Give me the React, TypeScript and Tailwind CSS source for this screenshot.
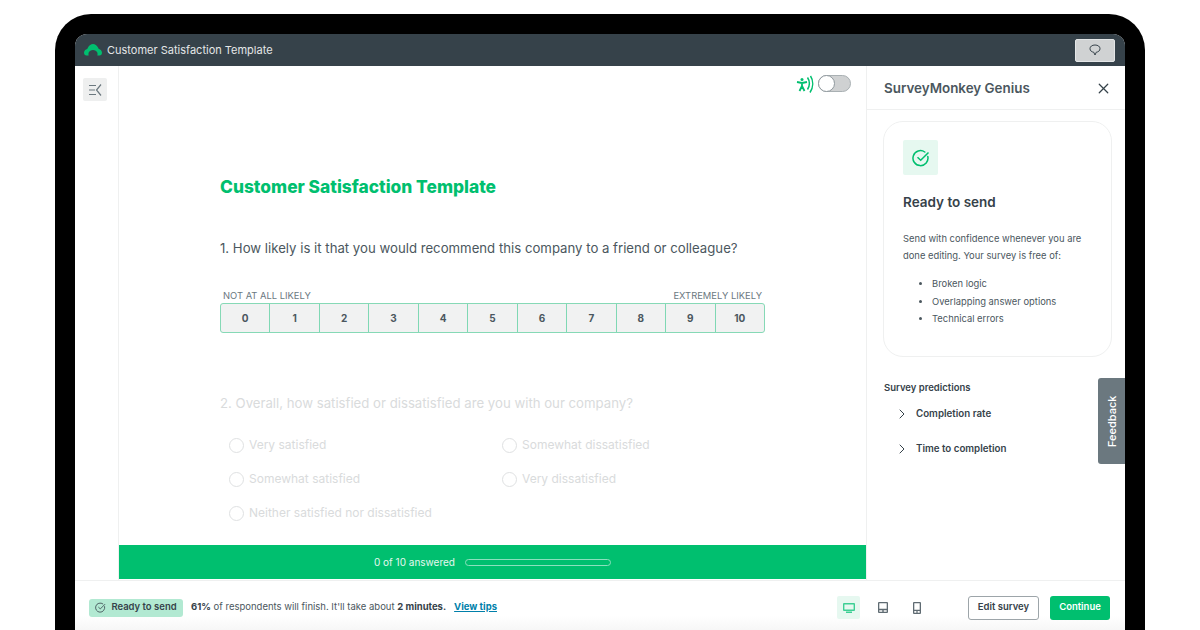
import { ChevronRight, X } from "lucide-react";

const FONT = "font-['Inter','Liberation_Sans',sans-serif]";

const scale = [0, 1, 2, 3, 4, 5, 6, 7, 8, 9, 10];

function Radio({ label }: { label: string }) {
  return (
    <div className="flex h-[34px] items-center gap-[5px]">
      <span className="h-[15px] w-[15px] rounded-full border border-[#dfe1e2]" />
      <span className="text-[12px] text-[#d9dbdc]">{label}</span>
    </div>
  );
}

function Logo() {
  return (
    <svg width="18" height="12" viewBox="0 0 18 12" fill="#00bf6f">
      <path d="M9 0C7 0 5.200 1.300 4 3.500L3.200 5C1.500 5.200 0 6.800 0 8.800C0 10.300 1 11.500 2.500 11.500H4.700C4.300 10.500 4.300 9.500 4.700 8.600C5.400 7 7 6 9 6C11 6 12.600 7 13.300 8.600C13.700 9.500 13.700 10.500 13.300 11.500H15.500C17 11.500 18 10.300 18 8.800C18 6.800 16.500 5.200 14.800 5L14 3.500C12.800 1.300 11 0 9 0Z" />
    </svg>
  );
}

function CollapseIcon() {
  return (
    <svg width="13" height="12" viewBox="0 0 13 12" fill="none" stroke="#6b787f" strokeWidth="1.2">
      <path d="M0 1.500H7M0 6H6M0 10.500H7M12 0.500L7.500 6L12 11.500" />
    </svg>
  );
}

function CommentIcon() {
  return (
    <svg width="12" height="12" viewBox="0 0 12 12" fill="none" stroke="#36424a" strokeWidth="1">
      <path d="M6 1C3 1 1 2.500 1 4.700C1 6.800 2.800 8 4.700 8.200L6 11L7.300 8.200C9.200 8 11 6.800 11 4.700C11 2.500 9 1 6 1Z" />
    </svg>
  );
}

function AccessibilityIcon() {
  return (
    <svg width="19" height="19" viewBox="0 0 19 19" fill="none" stroke="#00bf6f">
      <circle cx="6" cy="4.500" r="1.500" fill="#00bf6f" stroke="none" />
      <path d="M1 7L6 8L11 7M6 8V11M6 11L3.500 16M6 11L8.500 16" strokeWidth="1.800" />
      <path d="M11.500 2.500C14 6 14 11 11.500 14.500M14.500 1C17.500 5.500 17.500 12 14 17.500" strokeWidth="1.500" />
    </svg>
  );
}

function CheckCircle({ size, color, width }: { size: number; color: string; width: number }) {
  return (
    <svg width={size} height={size} viewBox="0 0 18 18" fill="none" stroke={color} strokeWidth={width}>
      <path d="M15.800 7.500A7.500 7.500 0 1 1 12.800 3" strokeLinecap="round" />
      <path d="M5.500 8.300L8.700 11.300L16.500 3.500" />
    </svg>
  );
}

function Desktop() {
  return (
    <svg width="12" height="10" viewBox="0 0 12 10" fill="#3ccf94">
      <path d="M1 0H11A1 1 0 0 1 12 1V7A1 1 0 0 1 11 8H1A1 1 0 0 1 0 7V1A1 1 0 0 1 1 0ZM1.400 1.400V6.600H10.600V1.400ZM3 8.500H9V10H3Z" fillRule="evenodd" />
    </svg>
  );
}

function Tablet() {
  return (
    <svg width="10" height="11" viewBox="0 0 10 11" fill="#5f6b72">
      <path d="M1 0H9A1 1 0 0 1 10 1V10A1 1 0 0 1 9 11H1A1 1 0 0 1 0 10V1A1 1 0 0 1 1 0ZM1.300 1.300V6.800H8.700V1.300ZM1.300 8.200V9.700H4.300V8.200ZM5.700 8.200V9.700H8.700V8.200Z" fillRule="evenodd" />
    </svg>
  );
}

function Phone() {
  return (
    <svg width="8" height="12" viewBox="0 0 8 12" fill="#5f6b72">
      <path d="M1 0H7A1 1 0 0 1 8 1V11A1 1 0 0 1 7 12H1A1 1 0 0 1 0 11V1A1 1 0 0 1 1 0ZM1.300 1.300V7.800H6.700V1.300ZM1.300 9V10.700H3.400V9ZM4.600 9V10.700H6.700V9Z" fillRule="evenodd" />
    </svg>
  );
}

export default function App() {
  return (
    <div className={`h-[630px] w-[1200px] overflow-hidden bg-white px-[55px] pt-[14px] ${FONT}`}>
      <div className="h-full rounded-t-[36px] bg-black px-[20px] pt-[20px]">
        <div className="flex h-full flex-col overflow-hidden rounded-t-[12px] bg-white">
          {/* Top bar */}
          <header className="flex h-[32px] shrink-0 items-center justify-between bg-[#36424a] pl-[9px] pr-[10px]">
            <div className="flex items-center gap-[5px]">
              <Logo />
              <span className="text-[11px] text-[#e4e6e7]">Customer Satisfaction Template</span>
            </div>
            <button className="flex h-[23px] w-[40px] items-center justify-center rounded-[2px] border border-[#e4e6e7] bg-[#d0d2d3]">
              <CommentIcon />
            </button>
          </header>

          <div className="flex min-h-0 flex-1">
            {/* Left rail */}
            <aside className="w-[44px] shrink-0 border-r border-[#eff0f0] pl-[8px] pt-[12px]">
              <div className="flex h-[23px] w-[24px] items-center justify-center rounded-[2px] bg-[#eeefef]">
                <CollapseIcon />
              </div>
            </aside>

            {/* Survey preview */}
            <main className="mb-px flex w-[747px] shrink-0 flex-col">
              <div className="flex justify-end gap-[3px] pr-[15px] pt-[9px]">
                <AccessibilityIcon />
                <span className="flex h-[17px] w-[33px] rounded-full border border-[#a9b0b3] bg-[#cfd1d2]">
                  <span className="-m-px h-[17px] w-[17px] rounded-full border border-[#8f989d] bg-white" />
                </span>
              </div>
              <div className="flex-1 pl-[101px]">
                <h1 className="mt-[81px] text-[17.350px] leading-[24px] font-extrabold text-[#00bf6f]">Customer Satisfaction Template</h1>
                <p className="mt-[37px] text-[13.200px] leading-[24px] text-[#4b575e]">
                  1. How likely is it that you would recommend this company to a friend or colleague?
                </p>
                <div className="mt-[29px] flex w-[545px] justify-between pl-[3px] pr-[3px] text-[9.400px] leading-[14px] text-[#6b787f]">
                  <span>NOT AT ALL LIKELY</span>
                  <span>EXTREMELY LIKELY</span>
                </div>
                <div className="flex h-[30px] w-[545px] overflow-hidden rounded-[3px] border border-[#86d9b6] bg-[#f1f2f2]">
                  {scale.map((n) => (
                    <div key={n} className="flex flex-1 items-center justify-center border-r border-[#7fd8b4] text-[10px] font-bold text-[#4b575e] last:border-r-0">
                      {n}
                    </div>
                  ))}
                </div>
                <p className="mt-[58px] text-[13.200px] leading-[24px] text-[#d9dbdc]">
                  2. Overall, how satisfied or dissatisfied are you with our company?
                </p>
                <div className="mt-[13px] grid w-[546px] grid-cols-[273px_1fr] pl-[9px]">
                  <Radio label="Very satisfied" />
                  <Radio label="Somewhat dissatisfied" />
                  <Radio label="Somewhat satisfied" />
                  <Radio label="Very dissatisfied" />
                  <Radio label="Neither satisfied nor dissatisfied" />
                </div>
              </div>
              <div className="flex h-[34px] shrink-0 items-center justify-center gap-[10px] bg-[#00bf6f] text-[10px] text-[#e6f8f0]">
                <span>0 of 10 answered</span>
                <span className="h-[7px] w-[146px] rounded-full border border-[#8ce0bd]" />
              </div>
            </main>

            {/* Genius panel */}
            <aside className="relative min-w-0 flex-1 border-l border-[#eff0f0]">
              <div className="flex h-[44px] items-center justify-between border-b border-[#eff0f0] pl-[17px] pr-[13px] pt-px">
                <span className="text-[13.400px] font-semibold text-[#4b575e]">SurveyMonkey Genius</span>
                <X size={17} className="mt-px text-[#36424a]" strokeWidth={1.700} />
              </div>
              <div className="ml-[16px] mt-[11px] h-[236px] w-[229px] rounded-[20px] border border-[#eff0f0] px-[19px] pt-[18px]">
                <div className="flex h-[35px] w-[35px] items-center justify-center rounded-[2px] bg-[#e6f8f0]">
                  <CheckCircle size={18} color="#00bf6f" width={1.500} />
                </div>
                <h2 className="mt-[15px] text-[13.500px] leading-[24px] font-semibold text-[#36424a]">Ready to send</h2>
                <p className="mt-[16px] text-[9.400px] leading-[17px] text-[#4b575e]">
                  Send with confidence whenever you are done editing. Your survey is free of:
                </p>
                <ul className="mt-[11px] list-disc pl-[29px] text-[9.400px] leading-[17.500px] text-[#4b575e]">
                  <li>Broken logic</li>
                  <li>Overlapping answer options</li>
                  <li>Technical errors</li>
                </ul>
              </div>
              <div className="pl-[17px] pt-[21px] text-[9.500px] font-semibold text-[#36424a]">
                <p className="leading-[20px]">Survey predictions</p>
                <div className="mt-[6px] flex h-[20px] items-center gap-[6px] pl-[10px] text-[9.750px]">
                  <ChevronRight size={16} strokeWidth={1.500} />
                  <span>Completion rate</span>
                </div>
                <div className="mt-[15px] flex h-[20px] items-center gap-[6px] pl-[10px] text-[9.750px]">
                  <ChevronRight size={16} strokeWidth={1.500} />
                  <span>Time to completion</span>
                </div>
              </div>
              <div className="absolute right-0 top-[312px] flex h-[86px] w-[27px] items-center justify-center rounded-l-[3px] bg-[#6b787f] pl-[2px]">
                <span className="-rotate-90 text-[11px] font-medium text-white">Feedback</span>
              </div>
            </aside>
          </div>

          {/* Bottom bar */}
          <footer className="flex h-[50px] shrink-0 items-center border-t border-[#eff0f0] bg-gradient-to-b from-white from-70% to-[#f7f7f7] pl-[14px] pr-[15px] pt-[4px]">
            <div className="flex h-[18px] w-[94px] items-center justify-center gap-[5px] rounded-[3px] bg-[#b2e9d2] text-[9.500px] font-semibold text-[#36424a]">
              <CheckCircle size={11} color="#36424a" width={1.300} />
              <span>Ready to send</span>
            </div>
            <p className="ml-[8px] text-[9.500px] text-[#4b575e]">
              <b className="font-bold text-[#36424a]">61%</b> of respondents will finish. It'll take about{" "}
              <b className="font-bold text-[#36424a]">2 minutes.</b>
            </p>
            <a className="ml-[8px] text-[9.500px] font-bold text-[#007faa] underline">View tips</a>
            <div className="ml-auto flex items-center gap-[11px]">
              <span className="flex h-[23px] w-[23px] items-center justify-center rounded-[2px] bg-[#e6f8f0]"><Desktop /></span>
              <span className="flex h-[23px] w-[23px] items-center justify-center"><Tablet /></span>
              <span className="flex h-[23px] w-[23px] items-center justify-center"><Phone /></span>
            </div>
            <button className="ml-[40px] h-[24px] w-[71px] rounded-[3px] border border-[#9da5a9] bg-white text-[9.500px] font-semibold text-[#36424a]">
              Edit survey
            </button>
            <button className="ml-[11px] h-[24px] w-[60px] rounded-[3px] bg-[#00bf6f] text-[9.500px] font-semibold text-white">
              Continue
            </button>
          </footer>
        </div>
      </div>
    </div>
  );
}
